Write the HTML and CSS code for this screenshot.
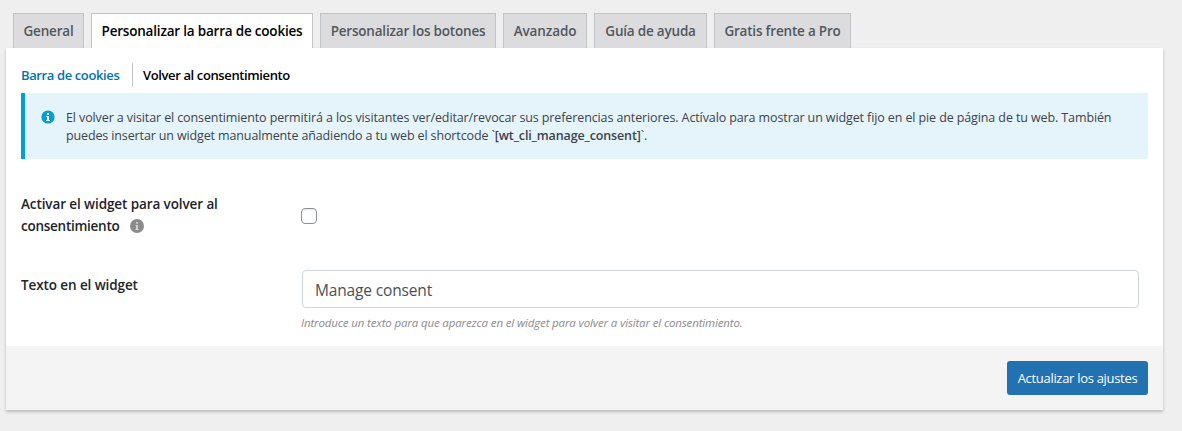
FILE: index.html
```html
<!DOCTYPE html>
<html lang="es">
<head>
<meta charset="utf-8">
<title>Personalizar la barra de cookies</title>
<link rel="stylesheet" href="styles.css">
</head>
<body>
<nav class="tabs">
<a class="tab tab-general">General</a>
<a class="tab tab-bar active">Personalizar la barra de cookies</a>
<a class="tab tab-buttons">Personalizar los botones</a>
<a class="tab tab-advanced">Avanzado</a>
<a class="tab tab-help">Guía de ayuda</a>
<a class="tab tab-pro">Gratis frente a Pro</a>
</nav>
<main class="panel">
<div class="content">
<div class="subnav"><a class="sub link"><span>Barra de cookies</span></a><a class="sub current"><span>Volver al consentimiento</span></a></div>
<section class="notice">
<svg class="notice-icon" viewBox="0 0 14 14"><circle cx="7" cy="7" r="6.6"/><path d="M6 3h2v2H6zM5.2 6H8v4h1v1H5v-1h1V7h-.8z"/></svg>
<p class="notice-text"><span class="n1">El volver a visitar el consentimiento permitirá a los visitantes ver/editar/revocar sus preferencias anteriores. Actívalo para mostrar un widget fijo en el pie de página de tu web. También</span><br><span class="n2">puedes insertar un widget manualmente añadiendo a tu web el shortcode `<b>[wt_cli_manage_consent]</b>`.</span></p>
</section>
<div class="row row-enable">
<div class="label"><span class="l1">Activar el widget para volver al</span><br><span class="l2">consentimiento</span><svg class="help-icon" viewBox="0 0 14 14"><circle cx="7" cy="7" r="7"/><path d="M6.2 3h1.6v1.7H6.2zM5.6 6h2.2v4h.8v1H5.4v-1h.8V7h-.6z"/></svg></div>
<div class="field"><input class="check" type="checkbox" aria-label="Activar el widget"></div>
</div>
<div class="row row-text">
<div class="label"><span class="l3">Texto en el widget</span></div>
<div class="field"><div class="textbox"><span>Manage consent</span></div><p class="hint"><span>Introduce un texto para que aparezca en el widget para volver a visitar el consentimiento.</span></p></div>
</div>
</div>
<footer class="footer"><button class="save">Actualizar los ajustes</button></footer>
</main>
</body>
</html>
```
FILE: styles.css
```css
* { box-sizing: border-box; }
body { margin: 0; padding: 13px 19px 21px 6px; height: 431px; background: #efefef; color: #3c434a; font-family: "Open Sans", "Noto Sans", sans-serif; font-size: 13px; white-space: nowrap; overflow: hidden; }
p { margin: 0; }
.tabs { display: flex; gap: 7px; padding-left: 7px; height: 35px; }
.tab { display: flex; justify-content: center; border: 1px solid #c3c4c7; border-bottom: 0; background: #dcdcde; color: #50575e; font-size: 13.5px; font-weight: 550; line-height: 35px; letter-spacing: -.2px; }
.active { background: #fff; color: #000; }
.tab-general { width: 71px; }
.tab-bar { width: 222px; }
.tab-buttons { width: 176px; }
.tab-advanced { width: 84px; letter-spacing: -.1px; }
.tab-help { width: 113px; }
.tab-pro { width: 137px; }
.panel { height: 362px; background: #fff; box-shadow: 0 2px 3px rgba(0,0,0,.22); }
.content { height: 298px; padding: 15px 15px 0; }
.subnav { display: flex; height: 24px; line-height: 24px; font-weight: 550; letter-spacing: -.38px; }
.link { width: 112px; border-right: 1px solid #c3c4c7; color: #0073aa; }
.current { padding-left: 10px; color: #000; }
.notice { display: flex; height: 66px; margin-top: 6px; padding: 16px 0 0 17px; border-left: 4px solid #00a0d2; background: #e5f4fa; }
.notice-icon { width: 14px; height: 14px; margin: 1px 11px 0 -1px; fill: #00a0d2; }
.notice-icon path { fill: #fff; }
.notice-text { line-height: 18px; font-size: 12.5px; }
.n1 { letter-spacing: -.11px; }
.n2 { letter-spacing: -.13px; }
.n2 b { font-weight: 600; }
.row { display: flex; }
.row-enable { margin-top: 34px; height: 77px; }
.label { width: 280px; color: #1d2327; font-size: 13.5px; font-weight: 550; line-height: 22px; letter-spacing: -.1px; }
.l2 { letter-spacing: -.26px; }
.help-icon { width: 14px; height: 14px; margin-left: 10px; vertical-align: -2px; fill: #8b8b8b; }
.help-icon path { fill: #ddd; }
.check { appearance: none; display: block; width: 16px; height: 16px; margin: 15px 0 0; border: 1px solid #8c8f94; border-radius: 4px; background: #fff; box-shadow: inset 0 1px 2px rgba(0,0,0,.1); }
.row-text .label { padding-top: 4px; }
.field { width: 838px; }
.textbox { height: 38px; margin-left: 1px; padding-left: 12px; border: 1px solid #ced4da; border-radius: 4px; color: #495057; font-size: 15.5px; line-height: 38px; letter-spacing: -.15px; }
.hint { margin-top: 6px; color: #8b8b8b; font-size: 11.5px; font-style: italic; line-height: 18px; letter-spacing: -.145px; }
.footer { display: flex; justify-content: flex-end; height: 64px; padding: 15px 15px 0; background: #f4f4f4; }
.save { width: 141px; height: 34px; padding: 0; border: 0; border-radius: 3px; background: #2271b1; color: #fff; font: 13px/34px "Open Sans", sans-serif; letter-spacing: -.3px; }
```
